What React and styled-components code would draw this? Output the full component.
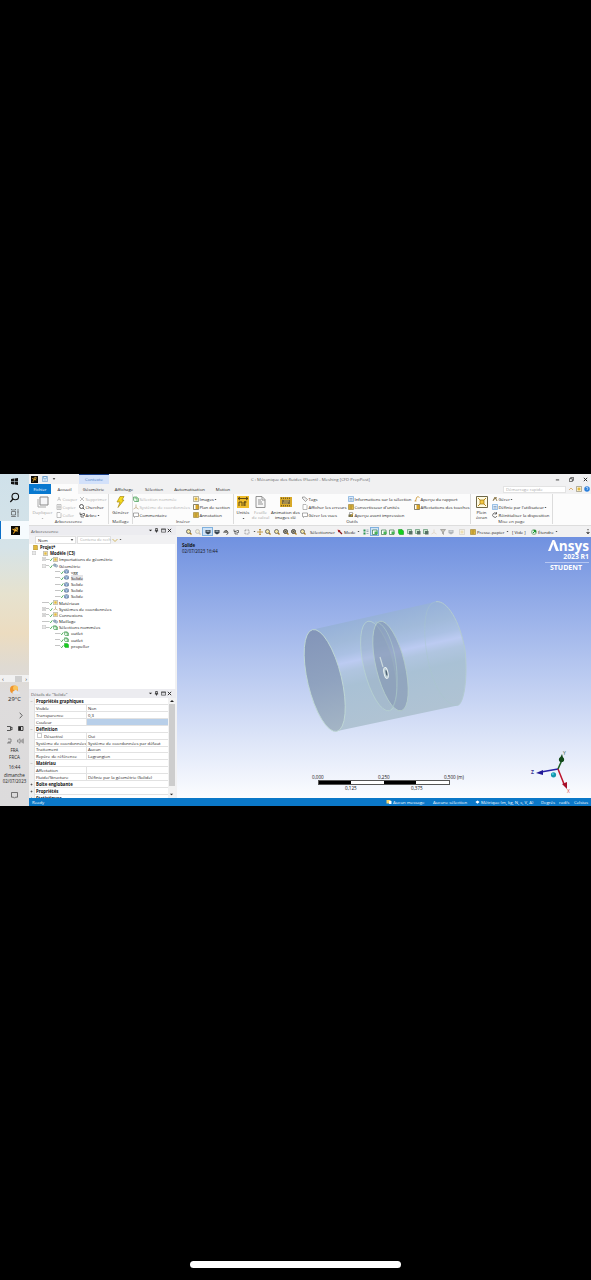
import React from "react";
import styled, { createGlobalStyle, css } from "styled-components";

const Global = createGlobalStyle`
  html, body { margin: 0; background: #000; }
  * { box-sizing: border-box; }
  svg { display: block; flex: none; }
`;

const Screen = styled.main`
  width: 591px;
  height: 1280px;
  background: #000;
  padding-top: 474px;
  display: flex;
  flex-direction: column;
  overflow: hidden;
  font-family: "Open Sans", "Liberation Sans", sans-serif;
  font-size: 4.3px;
  line-height: 6px;
  color: #222;
  white-space: nowrap;
`;
const Desktop = styled.div`
  display: flex;
  height: 332px;
  flex: none;
`;
const HomeBar = styled.div`
  width: 211px;
  height: 7px;
  border-radius: 4px;
  background: #fff;
  margin: auto auto 12px;
`;

/* Windows task bar */
const Taskbar = styled.aside`
  width: 29px;
  flex: none;
  display: flex;
  flex-direction: column;
  align-items: center;
  background: linear-gradient(#cfe1ea 0, #d5e3e8 22%, #e6e2cf 36%, #ecdcc0 48%, #dfdad2 58%, #dedcdc 66%, #dcdbdc 100%);
`;
const TaskSlot = styled.div`
  width: 29px;
  height: ${(p) => p.$h}px;
  flex: none;
  display: flex;
  align-items: center;
  justify-content: center;
  gap: ${(p) => p.$gap || 0}px;
  padding-left: ${(p) => p.$pl || 0}px;
  padding-top: ${(p) => p.$pt || 0}px;
  background: ${(p) => (p.$active ? "#f6fbfe" : "none")};
  border-left: ${(p) => (p.$active ? "1px solid #0a6fc8" : "0")};
`;
const TaskText = styled.div`
  height: ${(p) => p.$h || 7}px;
  line-height: ${(p) => p.$h || 7}px;
  font-size: ${(p) => p.$size || 4.5}px;
  flex: none;
`;
const TaskScroll = styled.div`
  width: 29px;
  height: 7px;
  flex: none;
  background: #f1f1f1;
  display: flex;
  align-items: center;
  justify-content: space-between;
  padding: 0 2px;
  font-size: 6px;
`;
const ScrollGrip = styled.i`
  width: 7px;
  height: 6px;
  margin-left: 8px;
  background: #cfcfcf;
`;

/* Application frame */
const AppWindow = styled.section`
  width: 562px;
  display: flex;
  flex-direction: column;
  background: #f1f1f2;
`;
const TitleBar = styled.header`
  height: 10px;
  display: flex;
  align-items: center;
  flex: none;
  padding-left: 2px;
`;
const QuickAccess = styled.div`
  width: 48px;
  display: flex;
  gap: 4px;
  align-items: center;
`;
const ContextTab = styled.div`
  width: 30px;
  height: 10px;
  background: #d3e1fa;
  border-top: 1px solid #183d86;
  color: #4979c4;
  text-align: center;
  line-height: 9px;
`;
const WindowTitle = styled.div`
  width: 118px;
  margin-left: 142px;
  color: #666;
`;
const WindowButtons = styled.div`
  margin-left: auto;
  width: 36px;
  display: flex;
  justify-content: space-between;
  align-items: center;
  padding-right: 3px;
`;
const TabRow = styled.nav`
  height: 10px;
  flex: none;
  display: flex;
  align-items: center;
`;
const Tab = styled.div`
  width: ${(p) => p.$w}px;
  height: 10px;
  line-height: 10px;
  flex: none;
  text-align: center;
  color: ${(p) => (p.$file ? "#fff" : "#222")};
  background: ${(p) => (p.$file ? "#0878cf" : p.$active ? "#fcfcfc" : "none")};
`;
const QuickLaunch = styled.div`
  width: 63px;
  height: 7px;
  margin-left: auto;
  padding-left: 2px;
  border: 1px solid #e3e3e3;
  background: #fff;
  color: #aaa;
  line-height: 5px;
`;
const TabTools = styled.div`
  display: flex;
  gap: 2px;
  padding: 0 1px 0 2px;
`;

const Ribbon = styled.div`
  height: 32px;
  flex: none;
  display: flex;
  background: #fcfcfc;
  border-bottom: 1px solid #ddd;
`;
const Group = styled.div`
  width: ${(p) => p.$w}px;
  height: 30px;
  flex: none;
  border-right: 1px solid #dcdcdc;
  display: flex;
  flex-direction: column;
`;
const GroupBody = styled.div`
  display: flex;
  height: 25px;
`;
const GroupName = styled.div`
  text-align: center;
  line-height: 4px;
  color: #333;
`;
const Column = styled.div`
  width: ${(p) => p.$w}px;
  flex: none;
  padding-top: 1px;
`;
const Command = styled.div`
  height: 8px;
  display: flex;
  align-items: center;
  gap: 0.5px;
  color: ${(p) => (p.$off ? "#a4a4a4" : "#222")};
  opacity: ${(p) => (p.$off ? 0.85 : 1)};
`;
const BigCommand = styled.div`
  width: ${(p) => p.$w}px;
  flex: none;
  display: flex;
  flex-direction: column;
  align-items: center;
  text-align: center;
  line-height: 4.5px;
  gap: 2px;
  padding-top: 2px;
  color: ${(p) => (p.$off ? "#a4a4a4" : "#222")};
`;

/* Panels */
const Body = styled.div`
  display: flex;
  height: 272px;
  flex: none;
`;
const Side = styled.div`
  width: 147px;
  flex: none;
  display: flex;
  flex-direction: column;
  background: #f1f1f3;
`;
const PanelHeader = styled.div`
  height: ${(p) => p.$h}px;
  flex: none;
  display: flex;
  align-items: center;
  justify-content: space-between;
  background: #ececf0;
  color: #555;
  padding: 0 4px 0 2px;
`;
const HeaderTools = styled.span`
  display: flex;
  align-items: center;
  gap: 1.5px;
  color: #222;
`;
const FilterRow = styled.div`
  height: 9px;
  display: flex;
  align-items: center;
  flex: none;
  gap: 1px;
  padding-left: 6px;
`;
const Select = styled.div`
  width: 41px;
  height: 8px;
  background: #fff;
  border: 1px solid #e0e0e0;
  display: flex;
  align-items: center;
  justify-content: space-between;
  padding: 0 1px 0 2px;
`;
const SearchField = styled(Select)`
  width: 34px;
  color: #aaa;
  font-size: 4px;
`;
const Tree = styled.div`
  height: 145px;
  margin-right: 1px;
  background: #fff;
  flex: none;
`;
const TreeRow = styled.div`
  height: 6.18px;
  line-height: 6.18px;
  display: flex;
  align-items: center;
  padding-left: ${(p) => [4, 3, 13, 26][p.$level]}px;
  font-weight: ${(p) => (p.$bold ? 700 : 400)};
  color: #111;
`;
const TreeLabel = styled.span`
  margin-left: ${(p) => [2, 2, 1, 2][p.$level]}px;
  background: ${(p) => (p.$selected ? "#e5e5e8" : "none")};
`;
const Branch = styled.i`
  width: ${(p) => p.$w}px;
  height: 1px;
  background: ${(p) => (p.$blank ? "none" : "#c4c4c4")};
`;
const Details = styled.div`
  flex: 1;
  min-height: 0;
  display: flex;
  overflow: hidden;
  background: #fff;
  margin-right: 1px;
`;
const Grid = styled.div`
  width: 139px;
  flex: none;
`;
const Property = styled.div`
  height: 6.93px;
  line-height: 6px;
  display: grid;
  grid-template-columns: 5px 52px 82px;
`;
const Cell = styled.div`
  border: solid #e2e2e2;
  border-width: 0 0 1px 1px;
  padding-left: 1px;
  display: flex;
  align-items: center;
  gap: 2px;
  background: ${(p) => (p.$blue ? "#b8cfe9" : "none")};
  ${(p) =>
    p.$head &&
    css`
      grid-column: 2 / 4;
      font-weight: 700;
      color: #111;
    `}
`;
const Gutter = styled.div`
  background: #f0f0f0;
  display: flex;
  align-items: center;
  justify-content: center;
`;
const CheckBox = styled.i`
  width: 5px;
  height: 5px;
  margin-left: 1px;
  border: 1px solid #ccc;
`;
const Scrollbar = styled.div`
  width: 7px;
  background: #f2f2f2;
  display: flex;
  flex-direction: column;
  align-items: center;
`;
const Thumb = styled.i`
  width: 6px;
  height: 82px;
  margin-bottom: 6px;
  background: #cdcdcd;
`;

const Main = styled.div`
  width: 415px;
  flex: none;
  display: flex;
  flex-direction: column;
`;
const Toolbar = styled.div`
  height: 11px;
  flex: none;
  display: flex;
  align-items: center;
  background: #f1f1f2;
  padding-left: 9px;
`;
const Tool = styled.div`
  width: ${(p) => p.$w}px;
  height: 9px;
  display: flex;
  flex: none;
  align-items: center;
  justify-content: ${(p) => (p.$start ? "flex-start" : "center")};
  gap: 1px;
  padding-left: ${(p) => p.$pl || 0}px;
  opacity: ${(p) => (p.$off ? 0.35 : 1)};
  background: ${(p) => (p.$on ? "#cfe3f7" : "none")};
  box-shadow: ${(p) => (p.$on ? "inset 0 0 0 1px #7fb0dd" : "none")};
`;
const Viewport = styled.div`
  height: 261px;
  background: linear-gradient(#7091e0, #fcfdff);
  display: grid;
  margin-left: 1px;
  > * { grid-area: 1 / 1; }
`;
const SceneInfo = styled.div`
  padding: 5px;
  font-size: 4.4px;
  line-height: 6px;
  color: #111;
`;
const Brand = styled.div`
  justify-self: end;
  align-self: start;
  width: 46px;
  padding: 1px 2px 0 0;
  color: #fff;
  text-align: right;
  font-weight: 700;
`;
const BrandName = styled.div`
  display: flex;
  justify-content: flex-end;
  align-items: center;
  font-size: 13.6px;
  line-height: 15px;
`;
const BrandVersion = styled.div`
  font-size: 6.8px;
  line-height: 8px;
`;
const BrandEdition = styled.div`
  margin-top: 1px;
  border-top: 1px solid #b5c6f2;
  font-size: 7px;
  line-height: 10px;
  padding-right: 7px;
`;
const Scale = styled.div`
  align-self: end;
  width: 160px;
  margin: 0 0 7px 135px;
  color: #111;
  font-size: 4.6px;
`;
const ScaleLabels = styled.div`
  display: flex;
  line-height: 6px;
  padding-left: ${(p) => p.$pad}px;
`;
const ScaleLabel = styled.span`
  width: 66px;
  flex: none;
`;
const ScaleBar = styled.div`
  width: 132px;
  height: 5px;
  margin-left: 6px;
  border: 1px solid #555;
  background: linear-gradient(90deg, #000 25%, #fff 25% 50%, #000 50% 75%, #fff 75%);
`;
const StatusBar = styled.footer`
  height: 8px;
  padding-left: 3px;
  background: #0b78c8;
  color: #fff;
  display: flex;
  align-items: center;
`;
const StatusItem = styled.span`
  width: ${(p) => p.$w}px;
  flex: none;
  display: flex;
  align-items: center;
  gap: 1px;
`;

const Y = "#e2b93d";
const shapes = {
  box: <path d="M1 2h10v8H1zM1 4h10" fill="none" stroke="currentColor" strokeWidth="1.4" />,
  cut: <path d="M3 10 6 2l3 8M4 7h5" fill="none" stroke="currentColor" />,
  x: <path d="m2 2 8 8M10 2 2 10" stroke="currentColor" strokeWidth="1.6" />,
  copy: <path d="M2 1h8v10H2zM4 4h4v4H4z" fill="#fff" stroke="currentColor" strokeWidth="1.5" />,
  search: <path d="M9 5A4 4 0 1 1 1 5a4 4 0 0 1 8 0M8 8l3 3" fill="none" stroke="#333" strokeWidth="1.6" />,
  zoom: <><circle cx="5" cy="5" r="4" fill="#f3e6a6" stroke="#555" strokeWidth="1.6" /><path d="m8 8 3 3" stroke="#a87b1c" strokeWidth="2.4" /></>,
  zoomDark: <><circle cx="5" cy="5" r="4" fill="#b9b294" stroke="#444" strokeWidth="2" /><path d="M3 5h4M5 3v4" stroke="#333" /><path d="m8 8 3 3" stroke="#a87b1c" strokeWidth="2.4" /></>,
  tree: <path d="M2 1v4h5M4 3v7h6M7 3h4v4H7" fill="none" stroke="#444" strokeWidth="1.4" />,
  comment: <path d="M1 2h10v7H5l-2 2V9H1z" fill="#fff" stroke="#555" />,
  page: <path d="M2 1h6l2 2v8H2z" fill="#fff" stroke="#777" />,
  yellow: <><path d="M1 1h10v10H1z" fill={Y} stroke="#82681c" /><path d="M3 4h6M3 8h5" stroke="#655323" /></>,
  section: <><path d="M1 1h10v10H1z" fill="#fff" stroke="#665b37" strokeWidth="1.5" /><path d="M5 2h6v8H5z" fill="#d9a526" /></>,
  image: <><path d="M1 1h10v10H1z" fill="#fff" stroke="#71663c" /><path d="M3 3h6v6H3z" fill={Y} /></>,
  folder: <path d="M1 0h8l2 2v10H1z" fill={Y} stroke="#8d742b" />,
  tag: <path d="M1 2h4l6 5-4 4-6-6z" fill="#eee" stroke="#555" />,
  info: <><path d="M1 1h10v10H1z" fill="#dcecff" stroke="#488ccc" /><path d="M3 5h6M3 8h6" stroke="#55718a" /></>,
  report: <path d="M2 10c3-1 2-7 4-8s4 0 5 1M1 10h4" fill="none" stroke="#c68a1b" strokeWidth="1.5" />,
  reset: <path d="M9 3a4.5 4.5 0 1 0 1 5M9 0v4H5" fill="none" stroke="#333" strokeWidth="1.3" />,
  wrench: <path d="M2 10 6 2l4 8M3 7l7-4" fill="none" stroke="#7a6531" strokeWidth="1.6" />,
  printer: <><path d="M3 1h6v4H3z" fill="#fff" stroke="#666" /><path d="M1 5h9v5H1z" fill="#77724f" /><path d="m6 9 4-6" stroke="#d6a62a" strokeWidth="2" /></>,
  cube: <><path d="m1 3 5-2 5 2v6l-5 2-5-2z" fill="#7da0c8" stroke="#3c5068" /><path d="m1 3 5 2 5-2M6 5v6" fill="none" stroke="#e1ecf7" /></>,
  dark: <><path d="M1 2h10v6l-5 3-5-3z" fill="#37444f" /><path d="M3 3h6v3H3z" fill="#8f9da9" /></>,
  green: <path d="M1 1h7l3 3v7H3L1 8z" fill="#13cf1c" stroke="#078b12" />,
  face: <><path d="M1 2h9v9H1z" fill="#fff" stroke="#276c38" strokeWidth="1.3" /><path d="M5 5h6v5H5z" fill="#47b554" /></>,
  faceDark: <><path d="M1 1h8v8H1z" fill="#cbe5cf" stroke="#287545" /><path d="M4 4h7v7H4z" fill="#567064" /></>,
  outlet: <path d="M1 2h6l4 3v6H3L1 8zM3 4h5v7" fill="#e8fae8" stroke="#168329" strokeWidth="1.3" />,
  points: <><path d="M1 1h4v4H1zM1 7h4v4H1z" fill="#2c9454" /><path d="M7 2h4M7 5h4M7 9h4" stroke="#4c6d80" /></>,
  move: <path d="M6 0v12M0 6h12M4 2l2-2 2 2M4 10l2 2 2-2" fill="none" stroke="#b7892a" strokeWidth="1.6" />,
  select: <path d="M2 2h8v8H2z" fill="none" stroke="#555" strokeDasharray="2 1" />,
  rotate: <><path d="M2 8a4 4 0 1 1 5 3" fill="none" stroke="#444" strokeWidth="2" /><path d="M4 4h5v4H4z" fill="#83817a" /></>,
  cursor: <><path d="m1 1 6 2-4 4z" fill="#c71d25" /><path d="m3 3 7 7" stroke="#81151b" strokeWidth="2.5" /></>,
  plus: <path d="M1 1h10v10H1zM3 6h6M6 3v6" fill="#fff" stroke="#777" />,
  minus: <path d="M1 1h10v10H1zM3 6h6" fill="#fff" stroke="#777" />,
  plusBare: <path d="M2 6h8M6 2v8" stroke="#222" strokeWidth="2" />,
  minusBare: <path d="M2 6h8" stroke="#999" strokeWidth="1.5" />,
  check: <path d="m2 8 3 3 5-7" fill="none" stroke="#219a2f" strokeWidth="2.2" />,
  mesh: <><circle cx="4" cy="5" r="3" fill="#a5b9cc" stroke="#56718a" /><circle cx="8" cy="7" r="3" fill="#becddc" stroke="#56718a" /></>,
  axes: <path d="M6 1v6l5 3M6 7l-5 3" fill="none" stroke="#aa8850" strokeWidth="1.3" />,
  down: <path d="m2 4 4 4 4-4z" fill="currentColor" />,
  up: <path d="m2 8 4-4 4 4z" fill="currentColor" />,
  pin: <path d="M4 1h4v6H4zM2 7h8M6 7v4" fill="none" stroke="#222" strokeWidth="1.8" />,
  dash: <path d="M2 7h8" stroke="#222" strokeWidth="2" />,
  restore: <path d="M1 4h7v7H1zM4 4V1h7v7H8" fill="none" stroke="#222" strokeWidth="1.5" />,
  close: <path d="m2 2 8 8M10 2 2 10" stroke="#222" strokeWidth="2.2" />,
  help: <><circle cx="6" cy="6" r="5.5" fill="#2c80dc" /><path d="M4 4c0-2 4-2 4 0S6 6 6 8" fill="none" stroke="#fff" strokeWidth="1.2" /></>,
  save: <path d="M1 1h10v10H1zM3 1h6v4H3zM3 8h6" fill="#e4f1fc" stroke="#4a89c0" />,
  collapse: <path d="m2 8 4-4 4 4" fill="none" stroke="#d89c4c" strokeWidth="1.5" />,
  tint: <path d="m1 4 5 5 5-5" fill="none" stroke="#d3b865" strokeWidth="2" />,
  funnel: <path d="M1 1h10L7 6v5L5 9V6z" fill="#c4c2b6" stroke="#777" />,
  expand: <><circle cx="6" cy="6" r="5" fill="#d5eed9" stroke="#41804b" /><path d="M4 8l5-5M5 3h4v4" fill="none" stroke="#16952b" strokeWidth="2" /></>,
  flag: <path d="m1 5 5-4 5 4-5 4zM6 9v3" fill="#fff" />,
  message: <><path d="M1 2h8v7H1z" fill="#f5d770" /><path d="M6 4h5v6H6z" fill="#fff" /></>,
  overflow: <path d="M4 1h4M6 3v2M3 7h6l-3 3z" fill="#333" stroke="#333" />,
};
const Icon = ({ k, s = 5 }) => (
  <svg width={s} height={s} viewBox="0 0 12 12">{shapes[k]}</svg>
);

const AnsysIcon = ({ s = 9 }) => (
  <svg width={s} height={s} viewBox="0 0 12 12">
    <path d="M0 0h12v12H0z" fill="#0c0b08" />
    <path d="m3 10 3-4M2 4l3 2 4-4M6 6l3 1" fill="none" stroke="#f5aa1c" strokeWidth="1.4" />
    <circle cx="7" cy="4" r="2" fill="none" stroke="#edc15b" />
  </svg>
);
const WinLogo = () => (
  <svg width="7" height="7" viewBox="0 0 14 14"><path d="m0 2 6-1v6H0zM7 1l7-1v7H7zM0 8h6v5l-6-1zM7 8h7v6l-7-1z" fill="#111" /></svg>
);
const Lens = () => (
  <svg width="11" height="11" viewBox="0 0 11 11"><circle cx="6.300" cy="4.500" r="3.300" fill="none" stroke="#111" strokeWidth="1.100" /><path d="M4 7 1.300 10" stroke="#111" strokeWidth="1.200" /></svg>
);
const TaskView = () => (
  <svg width="8" height="8" viewBox="0 0 8 8"><path d="M.5 2.500h4v3.500h-4zM.5 0v1h4V0M.5 8V7.500h4V8M7 0v8M6.500 3h1" fill="none" stroke="#555" strokeWidth=".7" /></svg>
);
const Weather = () => (
  <svg width="11" height="10" viewBox="0 0 11 10"><circle cx="5" cy="4.400" r="4" fill="#ef942d" /><circle cx="6.500" cy="3" r="2.500" fill="#f9c35a" /><path d="M5 9c-2 0-2-3 0-3 1-2 4-1 4 1 3 0 2 2 1 2z" fill="#dce6ef" /></svg>
);
const Chevron = () => (
  <svg width="4" height="7" viewBox="0 0 4 7"><path d="m.7.7 2.500 2.800L.7 6.300" fill="none" stroke="#333" strokeWidth=".7" /></svg>
);
const Camera = () => (
  <svg width="7" height="7" viewBox="0 0 7 7"><path d="M1 1.500h3.500v4H1M4.500 3 6 2v3l-1.500-1" fill="none" stroke="#333" strokeWidth=".8" /></svg>
);
const Battery = () => (
  <svg width="6" height="5" viewBox="0 0 6 5"><path d="M.5.5h4.500v4H.5z" fill="none" stroke="#222" strokeWidth=".8" /><path d="M1 1h2v3H1z" fill="#222" /></svg>
);
const Network = () => (
  <svg width="6" height="6" viewBox="0 0 6 6"><path d="M2 1h3v3H2M1 5h4M3 4v1" fill="none" stroke="#666" strokeWidth=".7" /></svg>
);
const Speaker = () => (
  <svg width="7" height="6" viewBox="0 0 7 6"><path d="M.5 2h1L3 .7v4.600L1.500 4h-1zM4 2v2M5.200 1v4M6.300.5v5" fill="none" stroke="#666" strokeWidth=".6" /></svg>
);
const Notice = () => (
  <svg width="7" height="7" viewBox="0 0 7 7"><path d="M.5.5h6v4.700H4.400l-.9 1-.9-1H.5z" fill="none" stroke="#444" strokeWidth=".7" /></svg>
);
const Duplicate = () => (
  <svg width="12" height="12" viewBox="0 0 12 12"><path d="M1 3v8h8" fill="none" stroke="#aaa" /><path d="M3 1h8v8H3z" fill="#f6f6f8" stroke="#888" /></svg>
);
const Bolt = () => (
  <svg width="9" height="12" viewBox="0 0 9 12"><path d="M4 .5h4L6 4h2L2 11.500 4 6H1z" fill="#f5d91b" stroke="#a98b16" strokeWidth=".7" /></svg>
);
const Units = () => (
  <svg width="12" height="12" viewBox="0 0 12 12"><path d="M0 0h12v12H0z" fill="#efbd2c" /><path d="M1 2.500h10M3 1 1 2.500 3 4M9 1l2 1.500L9 4M2 10V6h3v4M7 10V6h2.500M8 5v5" fill="none" stroke="#513e11" strokeWidth=".9" /></svg>
);
const Sheet = () => (
  <svg width="11" height="12" viewBox="0 0 11 12"><path d="M1 .5h6l3 3v8H1zM3 4h3M3 6h4M3 8h5M7 1v3h3" fill="#f8f8f8" stroke="#888" strokeWidth=".9" /></svg>
);
const Film = () => (
  <svg width="12" height="12" viewBox="0 0 12 12"><path d="M0 1h12v10H0z" fill="#d8a928" /><path d="M1 2.200h10M1 9.800h10" stroke="#53431a" strokeDasharray="1 1" /><path d="M2 4h8v4H2z" fill="#7b693a" /><path d="M4 5h5M3 7h5" stroke="#e9ce78" strokeWidth=".7" /></svg>
);
const FullScreen = () => (
  <svg width="12" height="12" viewBox="0 0 12 12"><path d="M.5.5h11v11H.5z" fill="#fffbe2" stroke="#6e6748" /><path d="m2 2 2.500 2.500M10 2 7.500 4.500M2 10l2.500-2.500M10 10 7.500 7.500" stroke="#b98818" /><path d="M4 4h4v4H4z" fill="#f4c740" stroke="#9c7616" strokeWidth=".7" /></svg>
);
const LetterMark = () => (
  <svg width="11" height="11" viewBox="0 0 11 11"><path d="M0 11 4.500 0h2.200L2.500 11z" fill="#fff" /><path d="m6.700 0 4.300 11H8L5.300 3.800z" fill="#fff" /></svg>
);

const Model = () => (
  <svg width="414" height="261" viewBox="177 537 414 261">
    <defs>
      <linearGradient id="shell" gradientUnits="userSpaceOnUse" x1="374" y1="615" x2="397" y2="719">
        <stop offset="0" stopColor="#96b1d9" />
        <stop offset=".18" stopColor="#a1bada" />
        <stop offset=".3" stopColor="#abc1e4" />
        <stop offset=".38" stopColor="#bccbf2" />
        <stop offset=".46" stopColor="#b0c5e0" />
        <stop offset=".6" stopColor="#a9c1d5" />
        <stop offset="1" stopColor="#b0c3d3" />
      </linearGradient>
      <linearGradient id="cap" x1="0" y1="0" x2="0" y2="1">
        <stop offset="0" stopColor="#8395b9" />
        <stop offset=".5" stopColor="#8fa2bf" />
        <stop offset="1" stopColor="#a4b5c5" />
      </linearGradient>
    </defs>
    <path d="M313 629.500 436 601.700C447 600 460 621 465 650 468 677 464 704 457.500 705.500L335 731.500Z" fill="url(#shell)" />
    <path d="M436 601.700C424 603 422 629 428 660 433 687 447 707 457.500 705.500" fill="none" stroke="#a9c7cb" strokeWidth=".6" opacity=".7" />
    <path d="M436 601.700C447 600 460 621 465 650 468 677 464 704 457.500 705.500" fill="none" stroke="#b3cbd1" strokeWidth="1" />
    <ellipse cx="324.700" cy="680.500" rx="17" ry="52.300" transform="rotate(-13.500 324.700 680.500)" fill="url(#cap)" stroke="#bfd8d5" strokeWidth=".9" />
    <ellipse cx="378.700" cy="666" rx="15" ry="46" transform="rotate(-13.500 378.700 666)" fill="#95aabd" fillOpacity=".3" stroke="#b8d4d1" strokeWidth=".7" />
    <ellipse cx="390.500" cy="666" rx="14.500" ry="46" transform="rotate(-13.500 390.500 666)" fill="#8295b1" fillOpacity=".6" stroke="#b4cecb" strokeWidth=".8" />
    <path d="M375 622c11-1 23 29 22 61 0 13-2 22-6 26" fill="none" stroke="#abc8c9" strokeWidth=".7" />
    <path d="m380 657 3 10" stroke="#cad8dd" strokeWidth="1.200" />
    <ellipse cx="386" cy="673" rx="2" ry="5.500" transform="rotate(-12 386 673)" fill="#b7cbd3" stroke="#edf4f4" />
    <ellipse cx="386.500" cy="673" rx=".8" ry="3" transform="rotate(-12 386.500 673)" fill="#4e6073" />
    <g strokeWidth="1.500">
      <path d="m558 769-17 3" stroke="#2720a6" />
      <path d="m536 773 7-3v5z" fill="#201897" />
      <path d="m558 769 4-9" stroke="#195b20" />
      <circle cx="561.500" cy="759.500" r="2.600" fill="#12491a" />
      <path d="m562 754-3 6 5 1z" fill="#12491a" />
      <path d="m558 769 6 15" stroke="#bd142c" />
      <path d="m567 789-5-5 5-2z" fill="#a70e28" />
      <circle cx="553.500" cy="774.800" r="2.600" fill="#1597ae" />
      <circle cx="552.800" cy="774" r="1" fill="#4bd1e0" />
    </g>
    <g fontSize="5" fontFamily="Open Sans">
      <text x="531" y="774" fill="#353293" fontWeight="700">Z</text>
      <text x="563" y="755" fill="#36633a">Y</text>
      <text x="567" y="793" fill="#e24a3d">X</text>
    </g>
  </svg>
);

const tree = [
  [0, null, "folder", "Projet*"],
  [1, "minus", "image", "Modèle (C3)"],
  [2, "plus", "image", "Importations de géométrie"],
  [2, "minus", "mesh", "Géométrie"],
  [3, null, "cube", "vgg"],
  [3, null, "cube", "Solide", true],
  [3, null, "cube", "Solide"],
  [3, null, "cube", "Solide"],
  [3, null, "cube", "Solide"],
  [2, null, "image", "Matériaux"],
  [2, "plus", "axes", "Systèmes de coordonnées"],
  [2, "plus", "image", "Connexions"],
  [2, null, "mesh", "Maillage"],
  [2, "minus", "outlet", "Sélections nommées"],
  [3, null, "outlet", "outlet"],
  [3, null, "outlet", "outlet"],
  [3, null, "green", "propeller"],
];
const details = [
  { head: "Propriétés graphiques" },
  { name: "Visible", value: "Non" },
  { name: "Transparence", value: "0,3" },
  { name: "Couleur", blue: true },
  { head: "Définition" },
  { name: "Désactivé", value: "Oui", box: true },
  { name: "Système de coordonnées", value: "Système de coordonnées par défaut" },
  { name: "Traitement", value: "Aucun" },
  { name: "Repère de référence", value: "Lagrangien" },
  { head: "Matériau" },
  { name: "Affectation" },
  { name: "Fluide/Structure", value: "Définie par la géométrie (Solide)" },
  { head: "Boîte englobante", closed: true },
  { head: "Propriétés", closed: true },
  { head: "Statistiques", closed: true },
];
const viewTools = [
  ["zoom", 8], ["zoom", 9, "off"], ["dark", 11, "on"], ["dark", 8], ["rotate", 9], ["tree", 12],
  ["select", 10], ["down", 4], ["move", 7], ["zoom", 9], ["zoom", 9], ["zoomDark", 9], ["zoomDark", 8], ["zoom", 9],
];
const filters = [
  ["points", 8], ["face", 9, "on"], ["face", 9], ["face", 8], ["green", 9], ["faceDark", 9], ["faceDark", 8],
  ["faceDark", 8], ["axes", 8, "off"], ["funnel", 9], ["dark", 8, "off"], ["image", 14, "off"],
];

const Cmd = ({ k, children, off, arrow }) => (
  <Command $off={off}><Icon k={k} s={6} />{children}{arrow && <Icon k="down" s={3} />}</Command>
);
const Tools = ({ items }) => items.map(([k, w, state], i) => (
  <Tool key={i} $w={w} $on={state === "on"} $off={state === "off"}><Icon k={k} s={k === "down" ? 3 : 6} /></Tool>
));
const PanelTitle = ({ h, children }) => (
  <PanelHeader $h={h}>{children}
    <HeaderTools><Icon k="down" /><Icon k="pin" /><Icon k="box" /><Icon k="close" /></HeaderTools>
  </PanelHeader>
);

const TreeItem = ({ item: [level, toggle, icon, label, selected] }) => (
  <TreeRow $level={level} $bold={level < 2}>
    {level > 0 && level < 3 && (toggle ? <Icon k={toggle} s={4} /> : <Branch $w={4} />)}
    {level === 1 && <Branch $w={7} $blank />}
    {level === 2 && <Branch $w={3} />}
    {level === 3 && <Branch $w={5} />}
    {level > 1 && <Icon k="check" s={4} />}
    <Icon k={icon} s={5} />
    <TreeLabel $level={level} $selected={selected}>{label}</TreeLabel>
  </TreeRow>
);

const DetailRow = ({ row }) => (
  <Property>
    <Gutter>{row.head && <Icon k={row.closed ? "plusBare" : "minusBare"} s={3} />}</Gutter>
    {row.head ? <Cell $head>{row.head}</Cell> : (
      <>
        <Cell>{row.box && <CheckBox />}{row.name}</Cell>
        <Cell $blue={row.blue}>{row.value}</Cell>
      </>
    )}
  </Property>
);

export default function App() {
  return (
    <Screen>
      <Global />
      <Desktop>
        <Taskbar>
          <TaskSlot $h={15}><WinLogo /></TaskSlot>
          <TaskSlot $h={16}><Lens /></TaskSlot>
          <TaskSlot $h={16}><TaskView /></TaskSlot>
          <TaskSlot $h={18} $active><AnsysIcon /></TaskSlot>
          <TaskSlot $h={136} />
          <TaskScroll>‹<ScrollGrip />›</TaskScroll>
          <TaskSlot $h={15}><Weather /></TaskSlot>
          <TaskText $size={5.8} $h={4}>29°C</TaskText>
          <TaskSlot $h={21} $pl={12} $pt={8}><Chevron /></TaskSlot>
          <TaskSlot $h={12} $gap={5}><Camera /><Battery /></TaskSlot>
          <TaskSlot $h={13} $gap={5}><Network /><Speaker /></TaskSlot>
          <TaskText $h={6}>FRA</TaskText>
          <TaskText $h={8}>FRCA</TaskText>
          <TaskText $h={12}>16:44</TaskText>
          <TaskText $h={4}>dimanche</TaskText>
          <TaskText $h={9} $size={4.4}>02/07/2023</TaskText>
          <TaskSlot $h={18}><Notice /></TaskSlot>
        </Taskbar>
        <AppWindow>
          <TitleBar>
            <QuickAccess><AnsysIcon s={7} /><Icon k="save" s={6} /><Icon k="down" s={4} /></QuickAccess>
            <ContextTab>Contexte</ContextTab>
            <WindowTitle>C : Mécanique des fluides (Fluent) - Meshing [CFD PrepPost]</WindowTitle>
            <WindowButtons><Icon k="dash" /><Icon k="restore" /><Icon k="close" /></WindowButtons>
          </TitleBar>
          <TabRow>
            <Tab $w={22} $file>Fichier</Tab>
            <Tab $w={27} $active>Accueil</Tab>
            <Tab $w={31}>Géométrie</Tab>
            <Tab $w={30}>Affichage</Tab>
            <Tab $w={30}>Sélection</Tab>
            <Tab $w={41}>Automatisation</Tab>
            <Tab $w={26}>Motion</Tab>
            <QuickLaunch>Démarrage rapide</QuickLaunch>
            <TabTools><Icon k="collapse" s={6} /><Icon k="image" s={6} /><Icon k="help" s={6} /></TabTools>
          </TabRow>
          <Ribbon>
            <Group $w={80}>
              <GroupBody>
                <BigCommand $w={27} $off><Duplicate />Dupliquer<Icon k="down" s={3} /></BigCommand>
                <Column $w={23}><Cmd k="cut" off>Couper</Cmd><Cmd k="copy" off>Copier</Cmd><Cmd k="page" off>Coller</Cmd></Column>
                <Column $w={29}><Cmd k="x" off>Supprimer</Cmd><Cmd k="search">Chercher</Cmd><Cmd k="tree" arrow>Arbre</Cmd></Column>
              </GroupBody>
              <GroupName>Arborescence</GroupName>
            </Group>
            <Group $w={24}>
              <GroupBody><BigCommand $w={23}><Bolt />Générer</BigCommand></GroupBody>
              <GroupName>Maillage</GroupName>
            </Group>
            <Group $w={101}>
              <GroupBody>
                <Column $w={60}><Cmd k="outlet" off>Sélection nommée</Cmd><Cmd k="axes" off>Système de coordonnées</Cmd><Cmd k="comment">Commentaire</Cmd></Column>
                <Column $w={40}><Cmd k="image" arrow>Images</Cmd><Cmd k="section">Plan de section</Cmd><Cmd k="yellow">Annotation</Cmd></Column>
              </GroupBody>
              <GroupName>Insérer</GroupName>
            </Group>
            <Group $w={237}>
              <GroupBody>
                <BigCommand $w={18}><Units />Unités<Icon k="down" s={3} /></BigCommand>
                <BigCommand $w={17} $off><Sheet /><span>Feuille<br />de calcul</span></BigCommand>
                <BigCommand $w={33}><Film /><span>Animation des<br />images clé</span></BigCommand>
                <Column $w={46}><Cmd k="tag">Tags</Cmd><Cmd k="page">Afficher les erreurs</Cmd><Cmd k="comment">Gérer les vues</Cmd></Column>
                <Column $w={66}><Cmd k="info">Informations sur la sélection</Cmd><Cmd k="yellow">Convertisseur d'unités</Cmd><Cmd k="printer">Aperçu avant impression</Cmd></Column>
                <Column $w={56}><Cmd k="report">Aperçu du rapport</Cmd><Cmd k="section">Affectations des touches</Cmd></Column>
              </GroupBody>
              <GroupName>Outils</GroupName>
            </Group>
            <Group $w={82}>
              <GroupBody>
                <BigCommand $w={21}><FullScreen /><span>Plein<br />écran</span></BigCommand>
                <Column $w={60}><Cmd k="wrench" arrow>Gérer</Cmd><Cmd k="info" arrow>Définie par l'utilisateur</Cmd><Cmd k="reset">Réinitialiser la disposition</Cmd></Column>
              </GroupBody>
              <GroupName>Mise en page</GroupName>
            </Group>
          </Ribbon>
          <Body>
            <Side>
              <PanelTitle h={9}>Arborescence</PanelTitle>
              <FilterRow>
                <Select>Nom<Icon k="down" s={4} /></Select>
                <SearchField>Contenu de rech</SearchField>
                <Icon k="tint" s={6} /><Icon k="down" s={3} />
              </FilterRow>
              <Tree>{tree.map((item, i) => <TreeItem key={i} item={item} />)}</Tree>
              <PanelTitle h={9}>Détails de "Solide"</PanelTitle>
              <Details>
                <Grid>{details.map((row, i) => <DetailRow key={i} row={row} />)}</Grid>
                <Scrollbar><Icon k="up" s={6} /><Thumb /><Icon k="down" s={5} /></Scrollbar>
              </Details>
            </Side>
            <Main>
              <Toolbar>
                <Tools items={viewTools} />
                <Tool $w={30} $pl={3} $start>Sélectionner</Tool>
                <Tool $w={25} $start><Icon k="cursor" s={6} />Mode<Icon k="down" s={3} /></Tool>
                <Tools items={filters} />
                <Tool $w={42} $pl={1} $start><Icon k="yellow" s={6} />Presse-papier<Icon k="down" s={3} /></Tool>
                <Tool $w={20} $pl={1} $start>[ Vide ]</Tool>
                <Tool $w={54} $start><Icon k="expand" s={6} />Étendre<Icon k="down" s={3} /></Tool>
                <Icon k="overflow" s={6} />
              </Toolbar>
              <Viewport>
                <Model />
                <SceneInfo><b>Solide</b><br />02/07/2023 16:44</SceneInfo>
                <Brand>
                  <BrandName><LetterMark />nsys</BrandName>
                  <BrandVersion>2023 R1</BrandVersion>
                  <BrandEdition>STUDENT</BrandEdition>
                </Brand>
                <Scale>
                  <ScaleLabels $pad={0}><ScaleLabel>0,000</ScaleLabel><ScaleLabel>0,250</ScaleLabel><ScaleLabel>0,500 (m)</ScaleLabel></ScaleLabels>
                  <ScaleBar />
                  <ScaleLabels $pad={33}><ScaleLabel>0,125</ScaleLabel><ScaleLabel>0,375</ScaleLabel></ScaleLabels>
                </Scale>
              </Viewport>
            </Main>
          </Body>
          <StatusBar>
            <StatusItem $w={354}>Ready</StatusItem>
            <StatusItem $w={47}><Icon k="message" s={6} />Aucun message</StatusItem>
            <StatusItem $w={42}>Aucune sélection</StatusItem>
            <StatusItem $w={66}><Icon k="flag" />Métrique (m, kg, N, s, V, A)</StatusItem>
            <StatusItem $w={18}>Degrés</StatusItem>
            <StatusItem $w={15}>rad/s</StatusItem>
            <StatusItem $w={16}>Celsius</StatusItem>
          </StatusBar>
        </AppWindow>
      </Desktop>
      <HomeBar />
    </Screen>
  );
}
